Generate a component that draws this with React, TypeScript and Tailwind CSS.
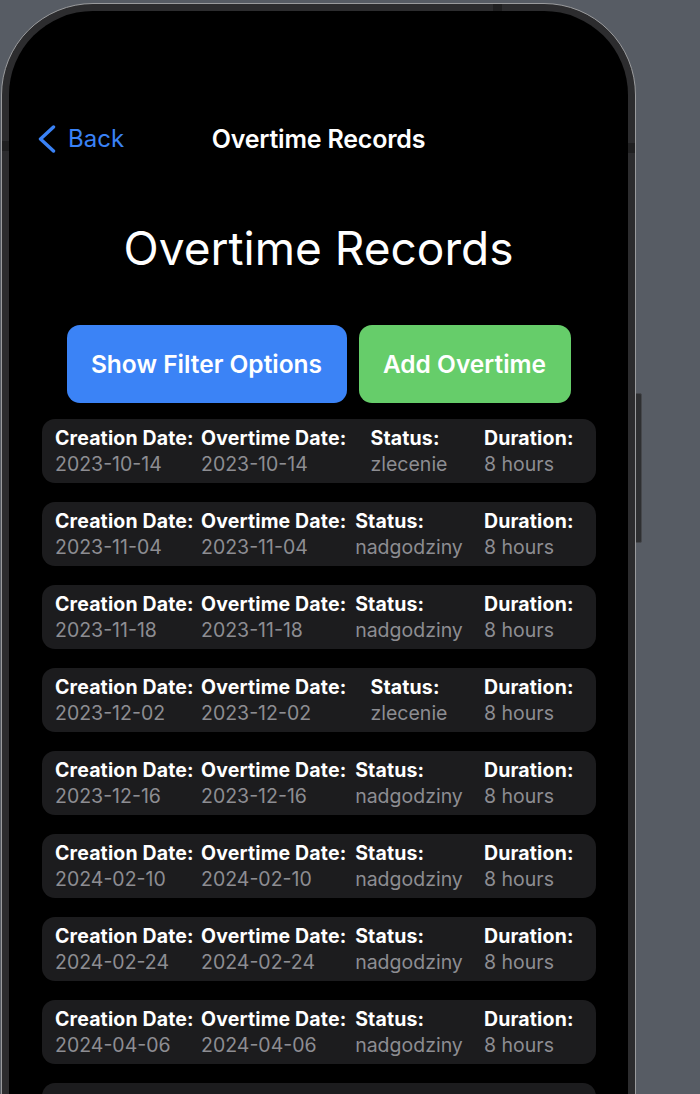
import React from "react";

type Rec = { date: string; status: string };

const records: Rec[] = [
  { date: "2023-10-14", status: "zlecenie" },
  { date: "2023-11-04", status: "nadgodziny" },
  { date: "2023-11-18", status: "nadgodziny" },
  { date: "2023-12-02", status: "zlecenie" },
  { date: "2023-12-16", status: "nadgodziny" },
  { date: "2024-02-10", status: "nadgodziny" },
  { date: "2024-02-24", status: "nadgodziny" },
  { date: "2024-04-06", status: "nadgodziny" },
  { date: "2024-04-20", status: "nadgodziny" },
];

function Card({ r }: { r: Rec }) {
  return (
    <div className="w-[554px] h-[64px] shrink-0 rounded-[13px] bg-[#1c1c1e] pl-[13px] py-[7px] flex text-[19.5px] leading-[24px] whitespace-nowrap">
      <div className="w-[146px] flex flex-col gap-[2px]">
        <span className="font-bold text-white tracking-[0.15px]">Creation Date:</span>
        <span className="text-[#8d8d92]">{r.date}</span>
      </div>
      <div className="w-[145px] flex flex-col gap-[2px]">
        <span className="font-bold text-white tracking-[0.15px]">Overtime Date:</span>
        <span className="text-[#8d8d92]">{r.date}</span>
      </div>
      <div className="w-[126px] flex justify-center">
        <div className="flex flex-col gap-[2px]">
          <span className="font-bold text-white tracking-[0.15px]">Status:</span>
          <span className="text-[#8d8d92]">{r.status}</span>
        </div>
      </div>
      <div className="ml-[12px] flex flex-col gap-[2px]">
        <span className="font-bold text-white tracking-[0.15px]">Duration:</span>
        <span className="text-[#8d8d92]">8 hours</span>
      </div>
    </div>
  );
}

export default function App() {
  return (
    <div
      className="relative w-[700px] h-[1094px] overflow-hidden bg-[#575c64]"
      style={{ fontFamily: "Inter, 'Noto Sans', sans-serif" }}
    >
      {/* side button */}
      <div className="absolute left-[635px] top-[393px] w-[7px] h-[150px] rounded-r-[2px] bg-[#2e2f31] border border-[#45474b]" />
      {/* phone */}
      <div className="relative ml-[1px] mt-[3px] w-[635px] h-[1200px] rounded-[92px] border border-[#9a9b9d] bg-[#2c2c2e] p-[7px]">
        {/* antenna bands */}
        <div className="absolute left-[491px] top-0 w-[9px] h-[7px] bg-[#1f1f20]" />
        <div className="absolute left-0 top-[137px] w-[7px] h-[10px] bg-[#1f1f20]" />
        <div className="absolute right-0 top-[139px] w-[7px] h-[10px] bg-[#1f1f20]" />
        <div className="h-full rounded-[84px] bg-black flex flex-col">
          {/* nav bar */}
          <div className="mt-[111px] h-[34px] grid grid-cols-[1fr_auto_1fr] items-center">
            <div className="flex items-center pl-[29px] text-[#3a82f6]">
              <svg width="18" height="28" viewBox="0 0 18 28" fill="none">
                <polyline
                  points="15.5,2 2.5,14 15.5,26"
                  stroke="#3a82f6"
                  strokeWidth="3.4"
                  strokeLinecap="round"
                  strokeLinejoin="round"
                />
              </svg>
              <span className="ml-[12px] text-[24px] leading-[34px]">Back</span>
            </div>
            <div className="text-white text-[25px] font-semibold leading-[34px] tracking-[-0.2px]">Overtime Records</div>
            <div />
          </div>
          {/* large title */}
          <div className="mt-[64px] text-center text-white text-[46px] leading-[56px]">Overtime Records</div>
          {/* buttons */}
          <div className="mt-[49px] flex justify-center gap-[12px]">
            <div className="w-[280px] h-[78px] rounded-[13px] bg-[#3b83f6] flex items-center justify-center text-white text-[24.5px] font-semibold">
              Show Filter Options
            </div>
            <div className="w-[212px] h-[78px] rounded-[13px] bg-[#66cd6a] flex items-center justify-center text-white text-[24.5px] font-semibold">
              Add Overtime
            </div>
          </div>
          {/* list */}
          <div className="mt-[16px] ml-[33px] flex flex-col gap-[19px]">
            {records.map((r, i) => (
              <Card key={i} r={r} />
            ))}
          </div>
        </div>
      </div>
    </div>
  );
}
